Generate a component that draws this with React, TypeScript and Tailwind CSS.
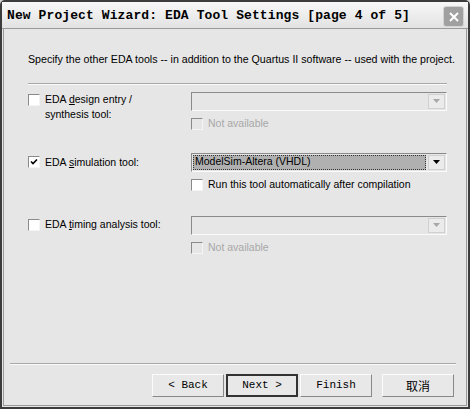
import React from "react";

const sans = { fontFamily: '"Liberation Sans", Arial, sans-serif' };
const mono = { fontFamily: '"Liberation Mono", "Courier New", monospace' };

function Check({ checked = false, disabled = false }: { checked?: boolean; disabled?: boolean }) {
  return (
    <div
      className={
        "w-[12px] h-[12px] shrink-0 border border-t-[#8a8a8a] border-l-[#8a8a8a] border-r-[#f4f4f4] border-b-[#f4f4f4] flex items-center justify-center " +
        (disabled ? "bg-[#e6e6e6]" : "bg-white")
      }
    >
      {checked && (
        <svg width="8" height="8" viewBox="0 0 8 8">
          <path d="M1 3.5 L3 5.5 L7 1.5" stroke="#000" strokeWidth="1.6" fill="none" />
        </svg>
      )}
    </div>
  );
}

function Combo({ value, disabled = false }: { value?: string; disabled?: boolean }) {
  return (
    <div className="w-[256px] h-[19px] flex items-stretch border border-t-[#8a8a8a] border-l-[#8a8a8a] border-r-[#fafafa] border-b-[#fafafa] bg-[#e6e6e6]">
      <div className="flex-1 flex items-center p-[1px]">
        {value && (
          <div
            className="h-full w-full bg-[#b0b0b0] border border-dotted border-[#333] flex items-center pl-[1px] text-[10.5px] text-black"
            style={sans}
          >
            {value}
          </div>
        )}
      </div>
      <div className="w-[17px] m-[1px] flex items-center justify-center border border-[#d0d0d0] bg-[#ebebeb]">
        <svg width="7" height="4" viewBox="0 0 7 4">
          <path d="M0 0 H7 L3.5 4 Z" fill={disabled ? "#a8a8a8" : "#000"} />
        </svg>
      </div>
    </div>
  );
}

function SubCheck({ label, disabled = false }: { label: string; disabled?: boolean }) {
  return (
    <div className="flex items-center gap-[5px] mt-[7px]">
      <Check disabled={disabled} />
      <span className={"text-[10.5px] leading-none " + (disabled ? "text-[#a8a8a8]" : "text-black")} style={sans}>
        {label}
      </span>
    </div>
  );
}

function Btn({ children, def = false, cjk = false }: { children: React.ReactNode; def?: boolean; cjk?: boolean }) {
  return (
    <div
      className={
        "w-[72px] h-[23px] flex items-center justify-center text-[11px] text-black bg-[#e8e8e8] " +
        (def
          ? "border-2 border-[#333]"
          : "border border-t-[#fbfbfb] border-l-[#fbfbfb] border-r-[#888] border-b-[#888]")
      }
      style={cjk ? { fontFamily: '"Noto Sans CJK SC", sans-serif', fontSize: "12px" } : mono}
    >
      {children}
    </div>
  );
}

export default function App() {
  return (
    <div className="w-[470px] h-[409px] bg-[#d6d6d6] p-0">
      <div className="w-full h-full flex flex-col border-2 border-[#3c3c3c] rounded-t-[5px] bg-[#e6e6e6]">
        <div className="h-[27px] flex items-center justify-between pl-[5px] pr-[4px] bg-gradient-to-b from-[#f8f8f8] to-[#e2e2e2] border-b border-[#9a9a9a]">
          <span className="text-[13px] font-bold text-black tracking-[0.1px] mt-[2px]" style={mono}>
            New Project Wizard: EDA Tool Settings [page 4 of 5]
          </span>
          <div className="w-[21px] h-[21px] mt-[3px] rounded-[3px] bg-[#a0a0a0] border border-[#d4d4d4] flex items-center justify-center">
            <svg width="12" height="12" viewBox="0 0 12 12">
              <path d="M2 2 L10 10 M10 2 L2 10" stroke="#fff" strokeWidth="2" />
            </svg>
          </div>
        </div>
        <div className="flex-1 flex flex-col border-l border-r border-b border-[#9a9a9a] mx-[1px] mb-[1px]">
          <div className="pl-[24px] pr-[10px] pt-[25px]">
            <p className="text-[10.65px] text-black leading-none whitespace-nowrap" style={sans}>
              Specify the other EDA tools -- in addition to the Quartus II software -- used with the project.
            </p>
            <div className="mt-[18px] w-[419px] h-[2px] border-t border-[#a8a8a8] border-b border-b-[#fafafa]" />
            <div className="mt-[7px] flex">
              <div className="w-[163px] flex items-start gap-[5px] pt-[2px]">
                <Check />
                <span className="text-[10.5px] leading-[15px] -mt-[2px] text-black" style={sans}>
                  EDA <u>d</u>esign entry /<br />synthesis tool:
                </span>
              </div>
              <div>
                <Combo disabled />
                <SubCheck label="Not available" disabled />
              </div>
            </div>
            <div className="mt-[23px] flex">
              <div className="w-[163px] flex items-start gap-[5px] pt-[3px]">
                <Check checked />
                <span className="text-[10.5px] leading-[15px] -mt-[1px] text-black" style={sans}>
                  EDA <u>s</u>imulation tool:
                </span>
              </div>
              <div>
                <Combo value="ModelSim-Altera (VHDL)" />
                <SubCheck label="Run this tool automatically after compilation" />
              </div>
            </div>
            <div className="mt-[25px] flex">
              <div className="w-[163px] flex items-start gap-[5px] pt-[3px]">
                <Check />
                <span className="text-[10.5px] leading-[15px] -mt-[2px] text-black" style={sans}>
                  EDA <u>t</u>iming analysis tool:
                </span>
              </div>
              <div>
                <Combo disabled />
                <SubCheck label="Not available" disabled />
              </div>
            </div>
          </div>
          <div className="flex-1" />
          <div className="ml-[6px] mr-[10px] h-[2px] border-t border-[#a8a8a8] border-b border-b-[#fafafa]" />
          <div className="flex justify-end items-center pr-[12px] pt-[9px] pb-[8px]">
            <div className="flex gap-[2px]">
              <Btn>&lt; Back</Btn>
              <Btn def>Next &gt;</Btn>
              <Btn>Finish</Btn>
            </div>
            <div className="ml-[10px]">
              <Btn cjk>取消</Btn>
            </div>
          </div>
        </div>
      </div>
    </div>
  );
}
